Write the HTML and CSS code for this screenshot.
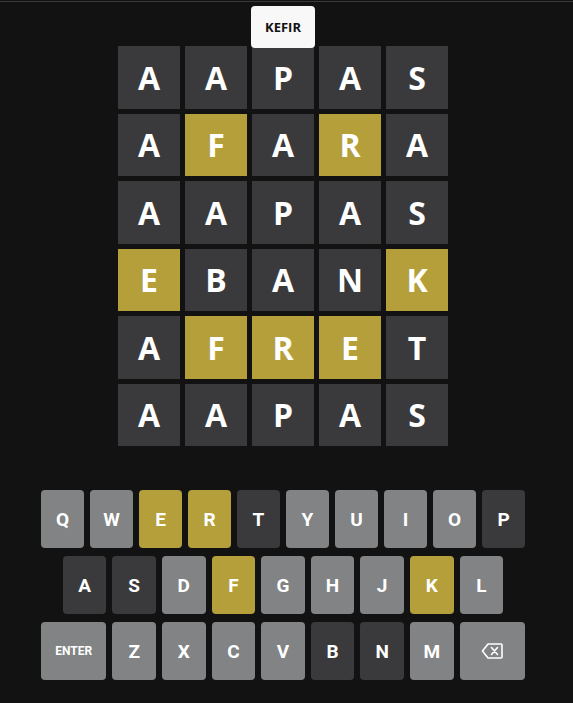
FILE: index.html
```html
<!DOCTYPE html>
<html lang="en">
<head>
<meta charset="utf-8">
<title>Wordle</title>
<link rel="stylesheet" href="styles.css">
</head>
<body>
<div class="topbar"></div>
<main class="app">
  <section class="board-wrap">
    <div class="toast">KEFIR</div>
    <div class="board">
      <div class="tile absent">A</div><div class="tile absent">A</div><div class="tile absent">P</div><div class="tile absent">A</div><div class="tile absent">S</div>
      <div class="tile absent">A</div><div class="tile present">F</div><div class="tile absent">A</div><div class="tile present">R</div><div class="tile absent">A</div>
      <div class="tile absent">A</div><div class="tile absent">A</div><div class="tile absent">P</div><div class="tile absent">A</div><div class="tile absent">S</div>
      <div class="tile present">E</div><div class="tile absent">B</div><div class="tile absent">A</div><div class="tile absent">N</div><div class="tile present">K</div>
      <div class="tile absent">A</div><div class="tile present">F</div><div class="tile present">R</div><div class="tile present">E</div><div class="tile absent">T</div>
      <div class="tile absent">A</div><div class="tile absent">A</div><div class="tile absent">P</div><div class="tile absent">A</div><div class="tile absent">S</div>
    </div>
  </section>
  <section class="keyboard">
    <div class="krow">
      <button class="key">Q</button><button class="key">W</button><button class="key present">E</button><button class="key present">R</button><button class="key absent">T</button><button class="key">Y</button><button class="key">U</button><button class="key">I</button><button class="key">O</button><button class="key absent">P</button>
    </div>
    <div class="krow">
      <div class="spacer"></div>
      <button class="key absent">A</button><button class="key absent">S</button><button class="key">D</button><button class="key present">F</button><button class="key">G</button><button class="key">H</button><button class="key">J</button><button class="key present">K</button><button class="key">L</button>
      <div class="spacer"></div>
    </div>
    <div class="krow">
      <button class="key wide small">ENTER</button><button class="key">Z</button><button class="key">X</button><button class="key">C</button><button class="key">V</button><button class="key absent">B</button><button class="key absent">N</button><button class="key">M</button>
      <button class="key wide" aria-label="backspace"><svg class="bs" width="22" height="16" viewBox="0 0 22 16"><path d="M7 1H20a1 1 0 0 1 1 1V14a1 1 0 0 1-1 1H7L1.5 8Z" fill="none" stroke="#fff" stroke-width="1.6" stroke-linejoin="round"/><path d="M10.5 4.5L16.5 11.5M16.5 4.5L10.5 11.5" stroke="#fff" stroke-width="1.6" stroke-linecap="round"/></svg></button>
    </div>
  </section>
</main>
</body>
</html>
```

FILE: styles.css
```css
html, body {
  margin: 0;
  padding: 0;
  background: #121213;
  height: 100%;
}
body {
  font-family: "Open Sans", "Liberation Sans", Arial, sans-serif;
  color: #fff;
}
.topbar {
  height: 1px;
  border-bottom: 1px solid #3a3a3c;
}
.app {
  width: 566px;
  display: flex;
  flex-direction: column;
  align-items: center;
}
.board-wrap {
  position: relative;
  padding-top: 44px;
  display: flex;
  justify-content: center;
  width: 100%;
}
.toast {
  position: absolute;
  top: 4px;
  left: 50%;
  transform: translateX(-50%);
  width: 64px;
  height: 42px;
  box-sizing: border-box;
  background: #f8f8f8;
  color: #121212;
  border-radius: 4px;
  display: flex;
  align-items: center;
  justify-content: center;
  font-family: "Open Sans", "Liberation Sans", Arial, sans-serif;
  font-weight: 700;
  font-size: 13px;
  z-index: 2;
}
.board {
  width: 330px;
  height: 400px;
  display: grid;
  grid-template-columns: repeat(5, 1fr);
  grid-template-rows: repeat(6, 1fr);
  gap: 5px;
}
.tile {
  display: flex;
  align-items: center;
  justify-content: center;
  font-family: "Open Sans", "Liberation Sans", Arial, sans-serif;
  font-size: 32px;
  font-weight: 700;
  color: #fff;
  background: #3a3a3c;
}
.tile.present { background: #b59f3b; }
.keyboard {
  width: 490px;
  margin-top: 44px;
}
.krow {
  display: flex;
  margin-bottom: 8px;
}
.spacer { flex: 0.5; }
.key {
  flex: 1;
  height: 58px;
  margin: 0 3px;
  padding: 0;
  border: 0;
  border-radius: 4px;
  background: #818384;
  color: #fff;
  font-family: Roboto, "Liberation Sans", sans-serif;
  font-weight: 700;
  font-size: 19px;
  display: flex;
  align-items: center;
  justify-content: center;
}
.key.absent { background: #3a3a3c; }
.key.present { background: #b59f3b; }
.key.wide { flex: 1.5; }
.key.small { font-size: 12px; }
```
